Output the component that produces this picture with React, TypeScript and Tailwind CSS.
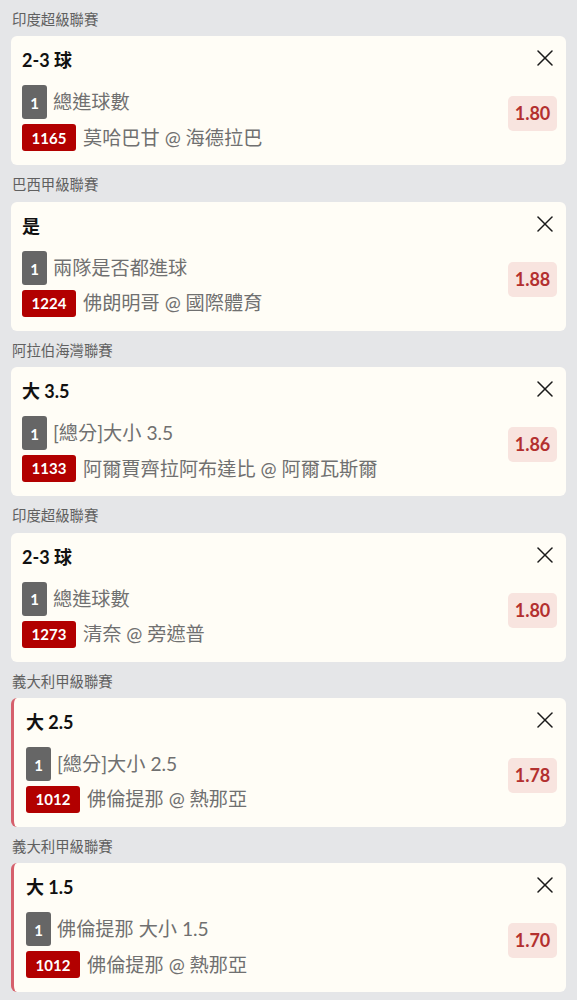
import React from 'react'

interface Bet {
  league: string
  selection: string
  market: string
  code: string
  teams: string
  odds: string
  marked?: boolean
}

const bets: Bet[] = [
  { league: '印度超級聯賽', selection: '2-3 球', market: '總進球數', code: '1165', teams: '莫哈巴甘 @ 海德拉巴', odds: '1.80' },
  { league: '巴西甲級聯賽', selection: '是', market: '兩隊是否都進球', code: '1224', teams: '佛朗明哥 @ 國際體育', odds: '1.88' },
  { league: '阿拉伯海灣聯賽', selection: '大 3.5', market: '[總分]大小 3.5', code: '1133', teams: '阿爾賈齊拉阿布達比 @ 阿爾瓦斯爾', odds: '1.86' },
  { league: '印度超級聯賽', selection: '2-3 球', market: '總進球數', code: '1273', teams: '清奈 @ 旁遮普', odds: '1.80' },
  { league: '義大利甲級聯賽', selection: '大 2.5', market: '[總分]大小 2.5', code: '1012', teams: '佛倫提那 @ 熱那亞', odds: '1.78', marked: true },
  { league: '義大利甲級聯賽', selection: '大 1.5', market: '佛倫提那 大小 1.5', code: '1012', teams: '佛倫提那 @ 熱那亞', odds: '1.70', marked: true },
]

function CloseIcon() {
  return (
    <svg width="16" height="16" viewBox="0 0 16 16" fill="none" stroke="#1a1a1a" strokeWidth="1.5" strokeLinecap="round">
      <line x1="1" y1="1" x2="15" y2="15" />
      <line x1="15" y1="1" x2="1" y2="15" />
    </svg>
  )
}

function BetCard({ bet }: { bet: Bet }) {
  return (
    <div
      className={`mx-[11px] flex h-[129px] rounded-[6px] bg-[#fffdf6] pr-[9px] ${
        bet.marked ? 'border-l-[3px] border-[#d6606c] pl-[12px]' : 'pl-[11px]'
      }`}
    >
      <div className="flex min-w-0 flex-1 flex-col pt-[12px]">
        <div className="h-[24px] text-[18px] font-bold leading-[24px] text-[#111]">{bet.selection}</div>
        <div className="mt-[13px] flex h-[34px] items-center gap-[6px]">
          <span className="flex h-[34px] w-[25px] items-center justify-center rounded-[3px] bg-[#666] pt-[2px] text-[15px] font-bold text-white">
            1
          </span>
          <span className="text-[19.2px] leading-[24px] text-[#707070]">{bet.market}</span>
        </div>
        <div className="mt-[5px] flex h-[27px] items-center gap-[7px]">
          <span className="flex h-[27px] w-[54px] items-center justify-center rounded-[3px] bg-[#b20000] text-[15px] font-bold text-white">
            {bet.code}
          </span>
          <span className="whitespace-nowrap text-[19.2px] leading-[24px] text-[#707070]">{bet.teams}</span>
        </div>
      </div>
      <div className="flex flex-col items-end pt-[14px]">
        <button className="mr-[4px] flex h-[16px] w-[16px] items-center justify-center">
          <CloseIcon />
        </button>
        <div className="mt-[30px] flex h-[35px] w-[49px] items-center justify-center rounded-[5px] bg-[#f8e4df] text-[18px] font-bold text-[#b3302f]">
          {bet.odds}
        </div>
      </div>
    </div>
  )
}

export default function App() {
  return (
    <div className="min-h-screen bg-[#e5e6e8] font-['Lato','Noto_Sans_CJK_TC',sans-serif]">
      {bets.map((bet, i) => (
        <section key={i}>
          <div className="h-[36.4px] px-[12px] pt-[10px] text-[14.4px] leading-[20px] text-[#606060]">{bet.league}</div>
          <BetCard bet={bet} />
        </section>
      ))}
    </div>
  )
}
